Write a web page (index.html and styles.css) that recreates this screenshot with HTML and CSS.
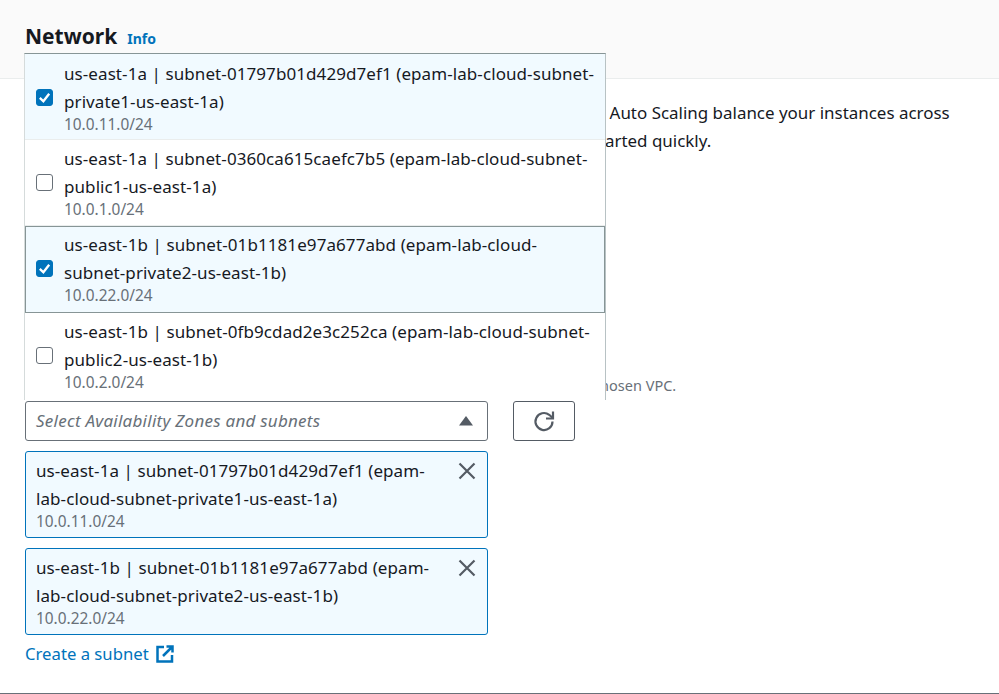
FILE: index.html
```html
<!DOCTYPE html>
<html lang="en">
<head>
  <meta charset="UTF-8">
  <title>Network</title>
  <link rel="stylesheet" href="styles.css">
</head>
<body>
  <div class="pagina">
    <div class="cabecera">
      <h2>Network</h2>
      <a class="info">Info</a>
    </div>

    <div class="contenido">
      <p class="descripcion">For most applications, you can use multiple Availability Zones and let EC2 Auto Scaling balance your instances across the zones. The default VPC and default subnets are suitable for getting started quickly.</p>

      <p class="ayuda">Define which Availability Zones and subnets your Auto Scaling group can use in the chosen VPC.</p>

      <div class="fila-select">
        <div class="select">
          <span>Select Availability Zones and subnets</span>
          <svg class="flecha" width="16" height="16" viewBox="0 0 16 16"><path d="M8 3 15 12.500H1Z" fill="#545b64"/></svg>
        </div>
        <button class="refrescar" aria-label="Refresh">
          <svg width="22" height="22" viewBox="0 0 22 22" fill="none" stroke="#545b64" stroke-width="2.200"><path d="M19.500 11.500A8.500 8.500 0 1 1 16.200 4.800L19.500 7.800"/><path d="M20 1.500V8.500H13"/></svg>
        </button>
      </div>

      <div class="token">
        <div class="token-texto">
          <div class="titulo">us-east-1a | subnet-01797b01d429d7ef1 (epam-lab-cloud-subnet-private1-us-east-1a)</div>
          <div class="cidr">10.0.11.0/24</div>
        </div>
        <svg class="cerrar" width="20" height="20" viewBox="0 0 20 20" fill="none" stroke="#545b64" stroke-width="2.200"><path d="M2.500 2.500 17.500 17.500M17.500 2.500 2.500 17.500"/></svg>
      </div>

      <div class="token">
        <div class="token-texto">
          <div class="titulo">us-east-1b | subnet-01b1181e97a677abd (epam-lab-cloud-subnet-private2-us-east-1b)</div>
          <div class="cidr">10.0.22.0/24</div>
        </div>
        <svg class="cerrar" width="20" height="20" viewBox="0 0 20 20" fill="none" stroke="#545b64" stroke-width="2.200"><path d="M2.500 2.500 17.500 17.500M17.500 2.500 2.500 17.500"/></svg>
      </div>

      <a class="crear">Create a subnet
        <svg width="18" height="18" viewBox="0 0 18 18" fill="none" stroke="#0073bb" stroke-width="2.500"><path d="M8 2H1.500V16.500H16V10"/><path d="M10.500 1.500H16.500V7.500M16 2 7 11"/></svg>
      </a>
    </div>

    <!-- Lista desplegada sobre el contenido -->
    <div class="lista">
      <div class="opcion marcada">
        <span class="check activo"><svg width="15" height="15" viewBox="0 0 16 16" fill="none" stroke="#fff" stroke-width="2.500"><path d="M3 8.500 6.800 12 13 4"/></svg></span>
        <div class="opcion-texto">
          <div class="titulo">us-east-1a | subnet-01797b01d429d7ef1 (epam-lab-cloud-subnet-private1-us-east-1a)</div>
          <div class="cidr">10.0.11.0/24</div>
        </div>
      </div>
      <div class="opcion">
        <span class="check"></span>
        <div class="opcion-texto">
          <div class="titulo">us-east-1a | subnet-0360ca615caefc7b5 (epam-lab-cloud-subnet-public1-us-east-1a)</div>
          <div class="cidr">10.0.1.0/24</div>
        </div>
      </div>
      <div class="opcion marcada foco">
        <span class="check activo"><svg width="15" height="15" viewBox="0 0 16 16" fill="none" stroke="#fff" stroke-width="2.500"><path d="M3 8.500 6.800 12 13 4"/></svg></span>
        <div class="opcion-texto">
          <div class="titulo">us-east-1b | subnet-01b1181e97a677abd (epam-lab-cloud-subnet-private2-us-east-1b)</div>
          <div class="cidr">10.0.22.0/24</div>
        </div>
      </div>
      <div class="opcion">
        <span class="check"></span>
        <div class="opcion-texto">
          <div class="titulo">us-east-1b | subnet-0fb9cdad2e3c252ca (epam-lab-cloud-subnet-public2-us-east-1b)</div>
          <div class="cidr">10.0.2.0/24</div>
        </div>
      </div>
    </div>
  </div>
</body>
</html>
```

FILE: styles.css
```css
* {
  box-sizing: border-box;
}

body {
  margin: 0;
  font-family: "Noto Sans", sans-serif;
  font-size: 16.95px;
  line-height: 28px;
  color: #16191f;
  background-color: white;
}

.pagina {
  position: relative;
  height: 694px;
  overflow: hidden;
  border-bottom: 1px solid #687078;
}

.cabecera {
  height: 79px;
  padding: 19px 25px 0;
  display: flex;
  align-items: baseline;
  gap: 10px;
  background-color: #fafafa;
  border-bottom: 1px solid #eaeded;
}

h2 {
  margin: 0;
  font-size: 21px;
  font-weight: 700;
  line-height: 34px;
}

.info {
  color: #0073bb;
  font-size: 14px;
  font-weight: 700;
}

.contenido {
  padding: 20px 25px 0;
}

.descripcion {
  margin: 0;
}

.ayuda {
  margin: 220px 0 0;
  font-size: 14.5px;
  line-height: 20px;
  color: #687078;
}

.fila-select {
  display: flex;
  gap: 25px;
  margin-top: 6px;
}

.select {
  width: 463px;
  height: 40px;
  padding: 0 10px;
  display: flex;
  align-items: center;
  justify-content: space-between;
  font-size: 17px;
  letter-spacing: 0.25px;
  font-style: italic;
  color: #687078;
  border: 1px solid #687078;
  border-radius: 3px;
}

.flecha {
  margin-right: 3px;
}

.refrescar {
  width: 62px;
  height: 40px;
  padding: 0;
  display: flex;
  align-items: center;
  justify-content: center;
  background-color: white;
  border: 1px solid #545b64;
  border-radius: 3px;
}

.token {
  width: 463px;
  margin-top: 10px;
  padding: 5px 10px 6px;
  display: flex;
  justify-content: space-between;
  background-color: #f1faff;
  border: 1px solid #0073bb;
  border-radius: 3px;
}

.token-texto {
  width: 402px;
}

.cerrar {
  margin-top: 4px;
}

.titulo {
  font-size: 17px;
  letter-spacing: 0.08px;
  color: #16191f;
}

.cidr {
  font-size: 15.4px;
  line-height: 18px;
  color: #687078;
}

.crear {
  margin-top: 5px;
  display: flex;
  align-items: center;
  gap: 7px;
  font-size: 16.7px;
  color: #0073bb;
}

.lista {
  position: absolute;
  top: 53px;
  left: 24px;
  width: 582px;
  height: 347px;
  overflow: hidden;
  background-color: white;
  border-top: 1px solid #879596;
  border-left: 1px solid #d5dbdb;
  border-right: 1px solid #b8c2c4;
}

.opcion {
  height: 86px;
  padding: 5px 10px 0 11px;
  display: flex;
  align-items: flex-start;
  gap: 11px;
  border-bottom: 1px solid #eaeded;
}

.opcion:first-child {
  padding-top: 6px;
}

.opcion:last-child {
  border-bottom: none;
}

.opcion-texto {
  width: 532px;
}

.opcion.marcada {
  background-color: #f1faff;
}

.opcion.foco {
  border: 1px solid #879596;
  padding: 4px 10px 0 10px;
  height: 87px;
}

.check {
  flex: none;
  width: 17px;
  height: 17px;
  margin-top: 29px;
  display: flex;
  align-items: center;
  justify-content: center;
  background-color: white;
  border: 1px solid #687078;
  border-radius: 3px;
}

.check.activo {
  background-color: #0073bb;
  border-color: #0073bb;
}
```
